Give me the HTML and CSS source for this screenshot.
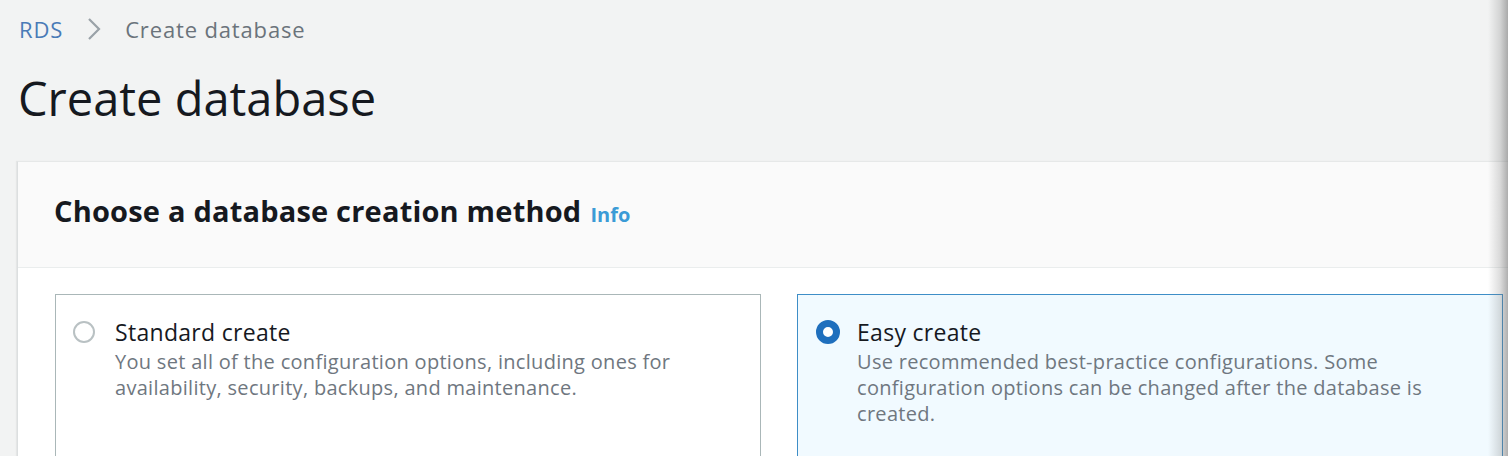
FILE: index.html
```html
<!DOCTYPE html>
<html lang="en">
<head>
<meta charset="utf-8">
<title>Create database</title>
<link rel="stylesheet" href="styles.css">
</head>
<body>
<div class="page">
  <nav class="breadcrumbs">
    <a class="crumb-link" href="#">RDS</a>
    <svg class="crumb-sep" width="14" height="24" viewBox="0 0 14 24"><polyline points="2,2 12,12 2,22" fill="none" stroke="#9aa2a8" stroke-width="2.2"/></svg>
    <span class="crumb-current">Create database</span>
  </nav>
  <h1 class="title">Create database</h1>
  <section class="card">
    <header class="card-header">
      <h2 class="card-title">Choose a database creation method</h2>
      <a class="info" href="#">Info</a>
    </header>
    <div class="card-body">
      <div class="tiles">
        <label class="tile">
          <span class="radio"></span>
          <span class="tile-text">
            <span class="tile-title">Standard create</span>
            <span class="tile-desc">You set all of the configuration options, including ones for availability, security, backups, and maintenance.</span>
          </span>
        </label>
        <label class="tile tile-selected">
          <span class="radio radio-checked"></span>
          <span class="tile-text">
            <span class="tile-title">Easy create</span>
            <span class="tile-desc">Use recommended best-practice configurations. Some configuration options can be changed after the database is created.</span>
          </span>
        </label>
      </div>
    </div>
  </section>
</div>
<div class="edge-shadow"></div>
</body>
</html>
```
FILE: styles.css
```css
html, body {
  margin: 0;
  padding: 0;
  background: #f2f3f3;
  overflow: hidden;
  height: 456px;
}
body {
  font-family: "Open Sans", Lato, sans-serif;
  color: #16191f;
  position: relative;
}
.page {
  padding-left: 17px;
}
.breadcrumbs {
  display: flex;
  align-items: center;
  height: 24px;
  padding-top: 17px;
  padding-left: 2px;
  font-size: 22px;
  letter-spacing: 0.85px;
}
.crumb-link {
  color: #4a7bb7;
  text-decoration: none;
}
.crumb-sep {
  margin: 0 24px 0 24px;
}
.crumb-current {
  color: #6b737b;
}
.title {
  margin: 29px 0 0 1px;
  font-size: 47px;
  font-weight: 400;
  line-height: 56px;
  letter-spacing: 0;
  color: #16191f;
  height: 56px;
}
.card {
  margin-top: 35px;
  width: 1560px;
  background: #ffffff;
  border-left: 1px solid #dcdfe0;
  border-top: 1px solid #e6e8e8;
  box-shadow: -1px 0 1px rgba(0,0,0,0.05);
}
.card-header {
  display: flex;
  align-items: baseline;
  height: 106px;
  box-sizing: border-box;
  padding: 29px 0 0 36px;
  background: #fafafa;
  border-bottom: 1px solid #eaeded;
}
.card-title {
  margin: 0;
  font-size: 29px;
  font-weight: 700;
  letter-spacing: 0.2px;
  color: #16191f;
}
.info {
  margin-left: 9px;
  font-size: 20px;
  font-weight: 700;
  color: #3b9bd6;
  text-decoration: none;
}
.card-body {
  padding: 26px 0 0 37px;
}
.tiles {
  display: grid;
  grid-template-columns: 706px 706px;
  column-gap: 36px;
}
.tile {
  display: flex;
  box-sizing: border-box;
  height: 180px;
  padding: 22px 55px 0 17px;
  border: 1px solid #aab7b8;
  background: #ffffff;
}
.tile-selected {
  border-color: #3e8ec7;
  background: #f1faff;
}
.radio {
  flex: none;
  width: 22px;
  height: 22px;
  box-sizing: border-box;
  border: 2px solid #b9c1c3;
  border-radius: 50%;
  margin-top: 4px;
  margin-right: 20px;
}
.radio-checked {
  border: 7px solid #1f6fbd;
  background: #ffffff;
  width: 24px;
  height: 24px;
  margin-top: 3px;
  margin-left: 1px;
  margin-right: 17px;
}
.tile-text {
  display: flex;
  flex-direction: column;
}
.tile-title {
  font-size: 23px;
  line-height: 30px;
  letter-spacing: 0.3px;
  color: #16191f;
}
.tile-desc {
  margin-top: 2px;
  font-size: 20px;
  line-height: 26px;
  letter-spacing: 0.3px;
  color: #6f777f;
}
.edge-shadow {
  position: absolute;
  top: 0;
  right: 0;
  width: 20px;
  height: 456px;
  background: linear-gradient(to right, rgba(120,120,120,0) 0%, rgba(120,120,120,0.25) 60%, rgba(110,110,110,0.55) 100%);
}
```
